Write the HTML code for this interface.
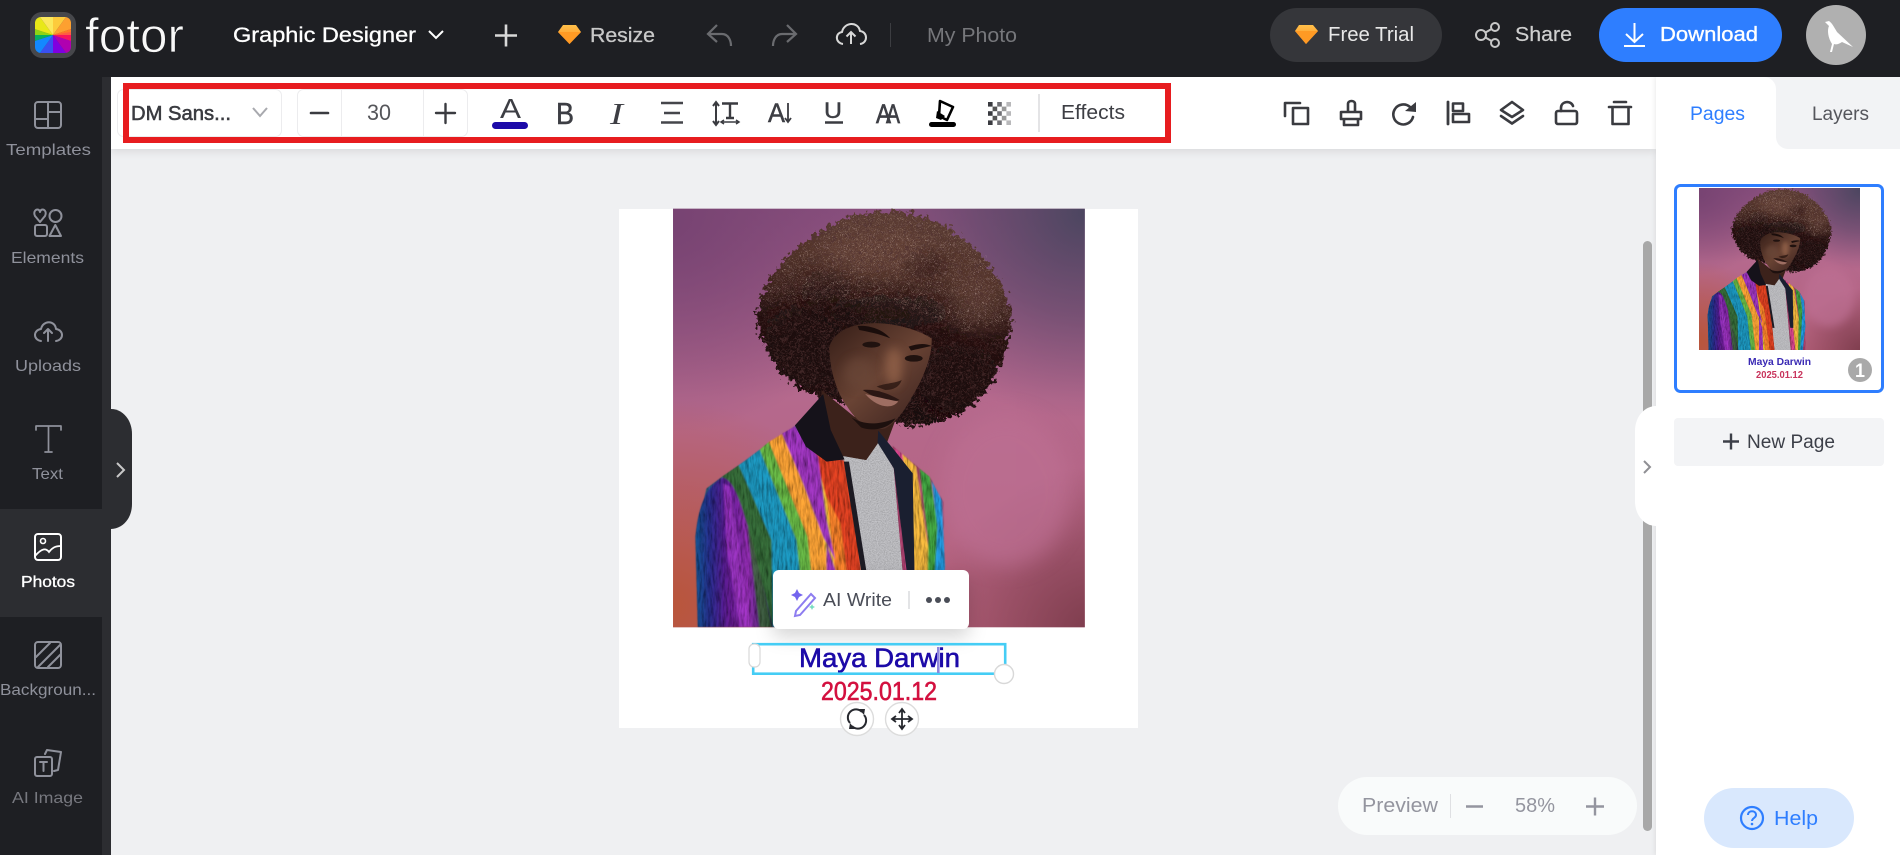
<!DOCTYPE html>
<html lang="en"><head><meta charset="utf-8"><title>Fotor Graphic Designer</title>
<style>
html,body{margin:0;padding:0;width:1900px;height:855px;overflow:hidden;background:#eff0f2}
svg{display:block}
text{font-family:"Liberation Sans",sans-serif;white-space:pre}
.ic{fill:none;stroke:#3a3b40;stroke-width:2.6;stroke-linecap:round;stroke-linejoin:round}
.sb{fill:none;stroke:#8f919b;stroke-width:2;stroke-linecap:round;stroke-linejoin:round}
.lab{fill:#8f919b;font-size:16px}
</style></head><body>
<svg xmlns="http://www.w3.org/2000/svg" width="1900" height="855" viewBox="0 0 1900 855">
<defs>
<linearGradient id="gem" x1="0" y1="0" x2="0" y2="1"><stop offset="0" stop-color="#ffc04a"/><stop offset="1" stop-color="#ff8a1c"/></linearGradient>
<linearGradient id="bg0" x1="0" y1="0" x2="0" y2="1"><stop offset="0" stop-color="#8a507e"/><stop offset=".45" stop-color="#b5698d"/><stop offset="1" stop-color="#b4607a"/></linearGradient>
<radialGradient id="bgTR" gradientUnits="userSpaceOnUse" cx="1350" cy="70" r="620"><stop offset="0" stop-color="#4c4660"/><stop offset=".5" stop-color="#5c4868" stop-opacity=".6"/><stop offset="1" stop-color="#6c4a70" stop-opacity="0"/></radialGradient>
<radialGradient id="bgBR" gradientUnits="userSpaceOnUse" cx="1380" cy="1330" r="500"><stop offset="0" stop-color="#7c3c4c"/><stop offset="1" stop-color="#7c3c4c" stop-opacity="0"/></radialGradient>
<radialGradient id="bgBL" gradientUnits="userSpaceOnUse" cx="140" cy="1250" r="620"><stop offset="0" stop-color="#b9553a"/><stop offset="1" stop-color="#b9553a" stop-opacity="0"/></radialGradient>
<radialGradient id="bgTL" gradientUnits="userSpaceOnUse" cx="140" cy="90" r="640"><stop offset="0" stop-color="#774372"/><stop offset="1" stop-color="#774372" stop-opacity="0"/></radialGradient>
<linearGradient id="hair" gradientUnits="userSpaceOnUse" x1="820" y1="60" x2="740" y2="710"><stop offset="0" stop-color="#5f4036"/><stop offset=".3" stop-color="#4e3027"/><stop offset=".55" stop-color="#261211"/><stop offset="1" stop-color="#180809"/></linearGradient>
<linearGradient id="skin" gradientUnits="userSpaceOnUse" x1="620" y1="420" x2="880" y2="700"><stop offset="0" stop-color="#3a211a"/><stop offset=".5" stop-color="#694334"/><stop offset="1" stop-color="#3e2420"/></linearGradient>
<linearGradient id="sleeve" gradientUnits="userSpaceOnUse" x1="220" y1="0" x2="440" y2="0"><stop offset="0" stop-color="#12508e"/><stop offset=".2" stop-color="#2a2a8a"/><stop offset=".42" stop-color="#5e1a8e"/><stop offset=".68" stop-color="#8f2cae"/><stop offset="1" stop-color="#25204a"/></linearGradient>

<filter id="fz" filterUnits="userSpaceOnUse" x="100" y="0" width="1300" height="1000"><feTurbulence type="fractalNoise" baseFrequency=".07" numOctaves="3" seed="4" result="n"/><feDisplacementMap in="SourceGraphic" in2="n" scale="46" xChannelSelector="R" yChannelSelector="G"/></filter>
<filter id="spk" filterUnits="userSpaceOnUse" x="100" y="0" width="1300" height="1000"><feTurbulence type="fractalNoise" baseFrequency=".22" numOctaves="3" seed="9"/><feColorMatrix values="0 0 0 0 .66  0 0 0 0 .5  0 0 0 0 .43  5 0 0 0 -2.85"/><feComposite in2="SourceAlpha" operator="in"/></filter>
<filter id="spd" filterUnits="userSpaceOnUse" x="100" y="0" width="1300" height="1000"><feTurbulence type="fractalNoise" baseFrequency=".12" numOctaves="3" seed="21"/><feColorMatrix values="0 0 0 0 .08  0 0 0 0 .03  0 0 0 0 .03  5 0 0 0 -2.4"/><feComposite in2="SourceAlpha" operator="in"/></filter>
<filter id="jk" filterUnits="userSpaceOnUse" x="100" y="600" width="1000" height="800"><feGaussianBlur in="SourceGraphic" stdDeviation="2" result="s"/><feTurbulence type="fractalNoise" baseFrequency=".16 .025" numOctaves="3" seed="7"/><feColorMatrix values="1.6 0 0 0 -.1  1.6 0 0 0 -.1  1.6 0 0 0 -.1  0 0 0 0 1" result="g"/><feComposite in="s" in2="g" operator="arithmetic" k1=".9" k2=".22" k3="0" k4="0"/><feComposite in2="s" operator="in"/></filter>
<filter id="tee" filterUnits="userSpaceOnUse" x="500" y="700" width="500" height="700"><feTurbulence type="fractalNoise" baseFrequency=".3" numOctaves="2" seed="2"/><feColorMatrix values=".7 0 0 0 .5  .7 0 0 0 .5  .7 0 0 0 .5  0 0 0 0 1" result="g"/><feComposite in="SourceGraphic" in2="g" operator="arithmetic" k1="1" k2="0" k3="0" k4="0"/><feComposite in2="SourceAlpha" operator="in"/></filter>
<filter id="b12" filterUnits="userSpaceOnUse" x="0" y="0" width="1500" height="1400"><feGaussianBlur stdDeviation="14"/></filter>
<filter id="b30" filterUnits="userSpaceOnUse" x="0" y="0" width="1500" height="1400"><feGaussianBlur stdDeviation="32"/></filter>
<filter id="sh" x="-20%" y="-30%" width="140%" height="180%"><feDropShadow dx="0" dy="8" stdDeviation="9" flood-color="#000" flood-opacity=".16"/></filter>
<filter id="shb" x="-5%" y="-50%" width="110%" height="250%"><feDropShadow dx="0" dy="3" stdDeviation="4" flood-color="#000" flood-opacity=".09"/></filter>
<filter id="shl" x="-20%" y="-5%" width="130%" height="110%"><feDropShadow dx="-1" dy="0" stdDeviation="2" flood-color="#000" flood-opacity=".08"/></filter>
<clipPath id="pc"><rect x="154" y="56" width="1196" height="1256"/></clipPath>
<clipPath id="lc"><rect x="35" y="17" width="36" height="36" rx="6"/></clipPath>
<clipPath id="hc"><path d="M405 345C420 265 480 190 590 118C680 62 800 45 905 90C1015 135 1105 240 1130 350C1145 440 1110 530 1065 600C1020 665 950 695 845 712L700 650L590 622C505 600 450 540 425 475C398 420 392 385 405 345Z"/></clipPath>
<path id="hp" d="M405 345C420 265 480 190 590 118C680 62 800 45 905 90C1015 135 1105 240 1130 350C1145 440 1110 530 1065 600C1020 665 950 695 845 712L700 650L590 622C505 600 450 540 425 475C398 420 392 385 405 345Z"/>

<g id="photo" clip-path="url(#pc)">
 <rect x="154" y="56" width="1196" height="1256" fill="url(#bg0)"/>
 <rect x="154" y="56" width="1196" height="1256" fill="url(#bgTL)"/>
 <rect x="154" y="56" width="1196" height="1256" fill="url(#bgTR)"/>
 <rect x="154" y="56" width="1196" height="1256" fill="url(#bgBL)"/>
 <rect x="154" y="56" width="1196" height="1256" fill="url(#bgBR)"/>
 <ellipse cx="1120" cy="900" rx="190" ry="230" fill="#bd6f93" opacity=".7" filter="url(#b30)"/>
 <!-- hair -->
 <g filter="url(#fz)">
  <use href="#hp" fill="url(#hair)"/>
  <g clip-path="url(#hc)">
   <ellipse cx="540" cy="470" rx="125" ry="125" fill="#1b0b0c" opacity=".85" filter="url(#b30)"/>
   <ellipse cx="985" cy="570" rx="120" ry="105" fill="#1a090d" opacity=".9" filter="url(#b30)"/>
   <ellipse cx="780" cy="365" rx="190" ry="48" fill="#150808" opacity=".7" filter="url(#b30)"/>
   <ellipse cx="600" cy="300" rx="70" ry="60" fill="#1f0f0e" opacity=".55" filter="url(#b30)"/>
   <ellipse cx="880" cy="225" rx="60" ry="40" fill="#24110f" opacity=".5" filter="url(#b12)"/>
   <ellipse cx="740" cy="190" rx="170" ry="60" fill="#7a5547" opacity=".45" filter="url(#b30)"/>
   <ellipse cx="1030" cy="330" rx="70" ry="85" fill="#6c4a3e" opacity=".5" filter="url(#b30)"/>
  </g>
  <use href="#hp" fill="#000" filter="url(#spd)" opacity=".7"/>
  <path d="M410 340C440 250 520 170 640 100C760 50 900 80 1010 150C1090 220 1125 310 1130 400L1000 420L800 340L600 330Z" fill="#000" filter="url(#spk)" opacity=".5"/>
 </g>
 <!-- neck -->
 <path d="M585 600L680 680L800 690L760 800L690 825L640 810L590 740Z" fill="#3c221b"/>
 <!-- right jacket -->
 <g filter="url(#jk)">
  <path d="M790 765L900 860L940 935L945 1312L830 1312Z" fill="#a8406c"/>
  <path d="M800 775L835 805L885 1140L860 1312L845 1312Z" fill="#dc4490"/>
  <path d="M820 790L860 830L905 1140L890 1312L870 1312Z" fill="#f0b53e"/>
  <path d="M870 835L900 860L922 1000L915 1312L890 1312L895 1050Z" fill="#40a040"/>
  <path d="M905 870L935 930L945 1130L925 1312L905 1312L922 1010Z" fill="#2296dc"/>
 </g>
 <!-- tee -->
 <path d="M648 798L715 810L750 758L795 835L835 1312L715 1312L680 1020L650 860Z" fill="#c4c4c8" filter="url(#tee)"/>
 <!-- jacket left -->
 <g filter="url(#jk)">
  <path d="M295 860L510 705L650 810L715 1312L225 1312L218 1040L250 895Z" fill="#2c5a7c"/>
  <path d="M295 860L345 825L445 1050L445 1312L400 1312L378 1040Z" fill="#356a38"/>
  <path d="M345 825L405 778L515 1050L540 1312L445 1312L440 1050Z" fill="#1f94bc"/>
  <path d="M405 778L432 755L545 1040L572 1312L540 1312L512 1050Z" fill="#66b644"/>
  <path d="M432 755L475 728L595 1050L632 1312L572 1312L545 1040Z" fill="#f8a036"/>
  <path d="M535 770L575 795L645 1090L665 1312L632 1312L592 1050Z" fill="#ecc036"/>
  <path d="M565 785L652 812L695 1080L715 1312L665 1312L640 1090Z" fill="#dc4022"/>
  <path d="M600 920L640 1000L680 1312L645 1312L615 1060Z" fill="#f4802c"/>
  <path d="M470 730L508 708L575 800L600 990L625 1110L590 1040L532 880Z" fill="#9c34bc"/>
  <path d="M600 1060L625 1140L630 1312L600 1312Z" fill="#9c34bc"/>
  <path d="M218 1040C225 960 245 890 298 862C330 870 350 930 385 1060L445 1312L225 1312Z" fill="url(#sleeve)"/>
  <path d="M300 880L320 890L350 1100L385 1312L350 1312L310 1080Z" fill="#a438c8" opacity=".7"/>
  <path d="M370 1010L390 1060L440 1312L405 1312Z" fill="#3a6a34" opacity=".8"/>
 </g>
 <!-- collar -->
 <path d="M508 706L590 612L612 720L652 808L600 815L540 770Z" fill="#15121a"/>
 <path d="M650 815L665 815L715 1140L700 1140Z" fill="#1c1a22"/>
 <path d="M750 722L800 785L850 850L855 1140L832 1140L795 835L748 758Z" fill="#1a1f30"/>
 <!-- face -->
 <path d="M608 470C620 430 660 405 720 400C780 395 860 415 905 445C908 490 885 560 848 620C828 660 800 700 770 715C730 725 690 700 660 650C630 610 608 540 608 470Z" fill="url(#skin)" />
 <ellipse cx="795" cy="530" rx="24" ry="58" fill="#8e5f46" opacity=".9" filter="url(#b12)"/>
 <ellipse cx="695" cy="550" rx="46" ry="48" fill="#6a4638" opacity=".7" filter="url(#b12)"/>
 <path d="M690 408C720 405 760 415 785 445C755 432 720 425 695 420Z" fill="#1a0d0b"/>
 <path d="M838 470C860 462 885 458 905 468C885 472 860 478 845 482Z" fill="#1d0f0d"/>
 <ellipse cx="730" cy="464" rx="26" ry="9" fill="#20120f"/>
 <ellipse cx="853" cy="505" rx="26" ry="10" fill="#20120f"/>
 <path d="M745 590C765 580 800 580 818 570C812 590 795 600 770 600Z" fill="#2a1612" opacity=".8"/>
 <path d="M705 600C740 596 780 610 812 630C780 640 740 625 705 600Z" fill="#2b1714"/>
 <path d="M712 612C750 622 785 630 808 634C790 660 745 652 712 612Z" fill="#9e6e62"/>
 <path d="M672 682C700 700 740 710 800 685C780 718 730 725 700 712Z" fill="#1d100e"/>
</g>
</defs>

<!-- canvas bg -->
<rect width="1900" height="855" fill="#eff0f2"/>

<!-- page -->
<rect x="619" y="209" width="519" height="519" fill="#fff"/>
<use href="#photo" transform="translate(620 190) scale(.34435 .33333)"/>

<!-- scrollbar -->
<rect x="1643" y="241" width="9" height="590" rx="4.5" fill="#a8a8a8"/>

<!-- toolbar -->
<rect x="111" y="77" width="1545" height="72" fill="#fff" filter="url(#shb)"/>

<!-- font selector -->
<rect x="117.500" y="89.500" width="164" height="47" rx="6" fill="#fff" stroke="#ececee"/>
<rect x="297.500" y="89.500" width="170" height="47" rx="6" fill="#fff" stroke="#ececee"/>
<path d="M341.500 90V136M423.500 90V136" stroke="#ececee"/>
<text x="131" y="120" font-size="20" fill="#3a3b40" stroke="#3a3b40" stroke-width=".55" textLength="100" lengthAdjust="spacingAndGlyphs">DM Sans...</text>
<path d="M253 108L260 116L267 108" fill="none" stroke="#a8a9ae" stroke-width="2"/>
<path d="M311 113H328" stroke="#3a3b40" stroke-width="2.600" stroke-linecap="round"/>
<text x="367" y="120" font-size="22" fill="#55565a" textLength="24" lengthAdjust="spacingAndGlyphs">30</text>
<path d="M436 113H455M445.500 104V123" stroke="#3a3b40" stroke-width="2.400" stroke-linecap="round"/>

<!-- text tools -->
<text x="500" y="118" font-size="28" fill="#3d3e44" textLength="21" lengthAdjust="spacingAndGlyphs">A</text>
<rect x="492" y="122" width="36" height="7" rx="3.500" fill="#1c0aa8"/>
<text x="556" y="124" font-size="31" fill="#3d3e44" stroke="#3d3e44" stroke-width=".5" textLength="18" lengthAdjust="spacingAndGlyphs">B</text>
<text x="610" y="124" font-size="31" font-style="italic" fill="#3d3e44" textLength="13" lengthAdjust="spacingAndGlyphs" style="font-family:'Liberation Serif',serif">I</text>
<path d="M661 103H683M664 113H680M661 122.500H683" stroke="#45464b" stroke-width="2.600"/>
<path d="M716 103V124M713 106L716 102L719 106M713 121L716 125L719 121" fill="none" stroke="#3a3b40" stroke-width="2"/>
<path d="M722 103.500H738M730 103.500V118M726 118H734" fill="none" stroke="#3a3b40" stroke-width="2.400"/>
<path d="M722 122H738M724 120L721 122L724 124M736 120L739 122L736 124" fill="none" stroke="#3a3b40" stroke-width="1.500"/>
<text x="768" y="122" font-size="27" fill="#3d3e44" stroke="#3d3e44" stroke-width=".5" textLength="17" lengthAdjust="spacingAndGlyphs">A</text>
<path d="M788 103V122M785 118L788 122L791 118" fill="none" stroke="#3a3b40" stroke-width="1.800"/>
<text x="824" y="118" font-size="22" fill="#3d3e44" stroke="#3d3e44" stroke-width=".4" textLength="18" lengthAdjust="spacingAndGlyphs">U</text>
<path d="M825 122.500H843" stroke="#3a3b40" stroke-width="2.600"/>
<text x="876" y="123" font-size="27" fill="#3d3e44" stroke="#3d3e44" stroke-width=".7" textLength="15" lengthAdjust="spacingAndGlyphs">A</text>
<text x="886" y="123" font-size="27" fill="#3d3e44" stroke="#3d3e44" stroke-width=".7" textLength="14" lengthAdjust="spacingAndGlyphs">A</text>
<path d="M940 101L953 107L947 120L939 116Z" fill="#fff" stroke="#000" stroke-width="2.600" stroke-linejoin="round"/>
<path d="M937 111L945 116L941 120L936 118Z" fill="#000"/>
<rect x="929" y="122" width="27" height="5" rx="2.500" fill="#000"/>
<g fill="#3a3b40">
 <rect x="988" y="102" width="4.600" height="4.600"/><rect x="997.200" y="102" width="4.600" height="4.600" fill="#707074"/><rect x="1006.400" y="102" width="4.600" height="4.600" fill="#b8b8ba"/>
 <rect x="992.600" y="106.600" width="4.600" height="4.600" fill="#555"/><rect x="1001.800" y="106.600" width="4.600" height="4.600" fill="#999"/>
 <rect x="988" y="111.200" width="4.600" height="4.600"/><rect x="997.200" y="111.200" width="4.600" height="4.600" fill="#707074"/><rect x="1006.400" y="111.200" width="4.600" height="4.600" fill="#b8b8ba"/>
 <rect x="992.600" y="115.800" width="4.600" height="4.600" fill="#555"/><rect x="1001.800" y="115.800" width="4.600" height="4.600" fill="#999"/>
 <rect x="988" y="120.400" width="4.600" height="4.600"/><rect x="997.200" y="120.400" width="4.600" height="4.600" fill="#707074"/><rect x="1006.400" y="120.400" width="4.600" height="4.600" fill="#b8b8ba"/>
</g>
<rect x="1038" y="94" width="2" height="38" fill="#e4e4e6"/>
<text x="1061" y="119" font-size="20" fill="#3d3e44" textLength="64" lengthAdjust="spacingAndGlyphs">Effects</text>

<!-- red annotation -->
<rect x="126" y="86" width="1042" height="54" fill="none" stroke="#e71c1f" stroke-width="6"/>

<!-- right tool icons -->
<g class="ic">
 <path d="M1285 116V103H1300"/><rect x="1293" y="108" width="15" height="16"/>
 <path d="M1348 112V104C1348 100 1355 100 1355 104V112M1341 112H1361V119H1341ZM1344 119V125H1358V119"/>
 <path d="M1413 117A10 10 0 1 1 1410 107"/>
 <path d="M1448 102V124" stroke-width="2.800"/><rect x="1453" y="103.500" width="10" height="7.500"/><rect x="1453" y="114" width="16" height="8"/>
 <path d="M1512 102L1523 110L1512 117L1501 110ZM1501 116L1512 123.500L1523 116"/>
 <rect x="1556" y="111" width="21" height="13" rx="2"/><path d="M1561 111V108C1561 101 1571 100 1573 106"/>
 <path d="M1609 107H1631M1614 102H1626M1612.500 107V124H1628.500V107"/>
</g>
<path d="M1405 111L1416 112V102Z" fill="#3a3b40"/>

<!-- right panel -->
<rect x="1656" y="77" width="244" height="778" fill="#fff" filter="url(#shl)"/>
<path d="M1776 77H1900V149H1788A12 12 0 0 1 1776 137Z" fill="#f2f3f5"/>
<path d="M1764 77A12 12 0 0 1 1776 89V77Z" fill="#f2f3f5"/>
<text x="1690" y="120" font-size="19" fill="#2e7eff" textLength="55" lengthAdjust="spacingAndGlyphs">Pages</text>
<text x="1812" y="120" font-size="19" fill="#55565c" textLength="57" lengthAdjust="spacingAndGlyphs">Layers</text>

<!-- thumbnail -->
<rect x="1675.500" y="185.500" width="207" height="206" rx="5" fill="#fff" stroke="#2e7eff" stroke-width="3"/>
<use href="#photo" transform="translate(1678.270 180.780) scale(.13462 .12898)"/>
<text x="1748" y="365" font-size="10" font-weight="700" fill="#3a2ab4" textLength="63" lengthAdjust="spacingAndGlyphs">Maya Darwin</text>
<text x="1756" y="378" font-size="10" font-weight="700" fill="#c8345c" textLength="47" lengthAdjust="spacingAndGlyphs">2025.01.12</text>
<circle cx="1860" cy="370" r="12" fill="#a9a9a9"/>
<text x="1855" y="377" font-size="19" font-weight="700" fill="#fff" textLength="10" lengthAdjust="spacingAndGlyphs">1</text>

<!-- new page -->
<rect x="1674" y="418" width="210" height="48" rx="4" fill="#f3f4f6"/>
<path d="M1723 441.500H1739M1731 433.500V449.500" stroke="#3c3f48" stroke-width="2.400"/>
<text x="1747" y="448" font-size="19" fill="#3c3f48" textLength="88" lengthAdjust="spacingAndGlyphs">New Page</text>

<!-- right handle -->
<path d="M1635 431C1635 416 1645 406 1656 406V526C1645 526 1635 516 1635 501Z" fill="#fff"/>
<path d="M1644 461L1650 467L1644 473" fill="none" stroke="#8f8f94" stroke-width="2"/>

<!-- zoom pill -->
<rect x="1338" y="777" width="299" height="58" rx="29" fill="#f9fbfb"/>
<text x="1362" y="812" font-size="20" fill="#94959f" textLength="76" lengthAdjust="spacingAndGlyphs">Preview</text>
<rect x="1450" y="794" width="1" height="24" fill="#dfe0e3"/>
<path d="M1466 806.500H1483" stroke="#94959f" stroke-width="2.400"/>
<text x="1515" y="812" font-size="20" fill="#94959f" textLength="40" lengthAdjust="spacingAndGlyphs">58%</text>
<path d="M1586 806.500H1604M1595 797.500V815.500" stroke="#94959f" stroke-width="2.400"/>

<!-- help -->
<rect x="1704" y="788" width="150" height="60" rx="30" fill="#d9e8fd"/>
<circle cx="1752" cy="818" r="11" fill="none" stroke="#2e7eff" stroke-width="2.200"/>
<path d="M1748 815C1748 810 1756 810 1756 815C1756 818 1752 818 1752 821" fill="none" stroke="#2e7eff" stroke-width="2"/>
<circle cx="1752" cy="824" r="1.300" fill="#2e7eff"/>
<text x="1774" y="825" font-size="20" fill="#2e7eff" textLength="44" lengthAdjust="spacingAndGlyphs">Help</text>

<!-- AI write popup -->
<rect x="773" y="570" width="196" height="59" rx="6" fill="#fff" filter="url(#sh)"/>
<path d="M796 611L811 594L815 598L800 615L795 616Z" fill="none" stroke="#8d7cf0" stroke-width="2"/>
<path d="M797 589L799 593L803 595L799 597L797 601L795 597L791 595L795 593Z" fill="#7465ee"/>
<path d="M812 604L813 606L815 607L813 608L812 610L811 608L809 607L811 606Z" fill="#78dcc0"/>
<text x="823" y="606" font-size="18" fill="#4a4d57" textLength="69" lengthAdjust="spacingAndGlyphs">AI Write</text>
<rect x="908" y="591" width="2" height="18" fill="#e3e4e6"/>
<g fill="#4a4d57"><circle cx="929" cy="600" r="3"/><circle cx="938" cy="600" r="3"/><circle cx="947" cy="600" r="3"/></g>

<!-- text on page -->
<text x="799" y="667" font-size="27" fill="#1c0aa8" stroke="#1c0aa8" stroke-width=".6" textLength="161" lengthAdjust="spacingAndGlyphs">Maya Darwin</text>
<text x="821" y="700" font-size="26" fill="#d3103f" stroke="#d3103f" stroke-width=".6" textLength="116" lengthAdjust="spacingAndGlyphs">2025.01.12</text>

<!-- selection -->
<rect x="753.200" y="644.200" width="252" height="29.500" fill="none" stroke="#45cdf5" stroke-width="2.600"/>
<rect x="937" y="647" width="2.600" height="26" fill="#8f86dc"/>
<rect x="749" y="644" width="11" height="23" rx="5" fill="#fff" stroke="#d8d8d8" stroke-width="1.200"/>
<circle cx="1004" cy="674" r="9.500" fill="#fff" stroke="#d8d8d8" stroke-width="1.400"/>
<circle cx="857" cy="719" r="16.500" fill="#fff" stroke="#dcdcdc" stroke-width="1.400"/>
<circle cx="902" cy="719" r="16.500" fill="#fff" stroke="#dcdcdc" stroke-width="1.400"/>
<path d="M850 723A8 8 0 0 1 862 712M864 715A8 8 0 0 1 852 726" fill="none" stroke="#26282e" stroke-width="2"/>
<path d="M859 709L865 709L864 715ZM855 729L849 729L850 723Z" fill="#26282e"/>
<path d="M893 719H911M902 710V728M899 713L902 709L905 713M899 725L902 729L905 725M896 716L892 719L896 722M908 716L912 719L908 722" fill="none" stroke="#26282e" stroke-width="1.800"/>

<!-- top bar -->
<rect width="1900" height="77" fill="#1e1f23"/>
<rect x="30" y="12" width="46" height="46" rx="12" fill="#46474b"/>
<g clip-path="url(#lc)">
 <path d="M53 35L53 5L70.600 10.700Z" fill="#fdcb3c"/>
 <path d="M53 35L70.600 10.700L81.500 25.700Z" fill="#fda030"/>
 <path d="M53 35L81.500 25.700L81.500 44.300Z" fill="#fe5b45"/>
 <path d="M53 35L81.500 30L81.500 25.700Z" fill="#fe7a28"/>
 <path d="M53 35L81.500 44.300L70.600 59.300Z" fill="#b000b0"/>
 <path d="M53 35L81.500 35L81.500 44.300Z" fill="#f8145e"/>
 <path d="M53 35L70.600 59.300L53 65Z" fill="#8000e0"/>
 <path d="M53 35L53 65L35.400 59.300Z" fill="#3a50f0"/>
 <path d="M53 35L35.400 59.300L24.500 44.300Z" fill="#1388ff"/>
 <path d="M53 35L24.500 44.300L24.500 35Z" fill="#06b060"/>
 <path d="M53 35L24.500 35L24.500 25.700Z" fill="#8ed414"/>
 <path d="M53 35L24.500 25.700L35.400 10.700Z" fill="#e8e818"/>
 <path d="M53 35L35.400 10.700L53 5Z" fill="#fbe85c"/>
</g>
<text x="85" y="52" font-size="48" fill="#f8f8f8" stroke="#1e1f23" stroke-width=".8" textLength="99" lengthAdjust="spacingAndGlyphs">fotor</text>
<text x="233" y="42" font-size="21" fill="#fff" stroke="#fff" stroke-width=".3" textLength="183" lengthAdjust="spacingAndGlyphs">Graphic Designer</text>
<path d="M429 31L436 38L443 31" fill="none" stroke="#fff" stroke-width="2"/>
<path d="M495 35.500H517M506 24.500V46.500" stroke="#d8d8d8" stroke-width="2.600"/>
<path d="M563 25H576L581 32L569.500 44L558 32Z" fill="url(#gem)"/>
<path d="M558 32H581L569.500 44Z" fill="#ff9a24"/>
<text x="590" y="42" font-size="20" fill="#c8c8c8" stroke="#c8c8c8" stroke-width=".3" textLength="65" lengthAdjust="spacingAndGlyphs">Resize</text>
<path d="M717 25L708 34L717 42M708 34H722C728 34 731 40 731 46" fill="none" stroke="#6a6b6f" stroke-width="2.200"/>
<path d="M787 25L796 34L787 42M796 34H782C776 34 773 40 773 46" fill="none" stroke="#6a6b6f" stroke-width="2.200"/>
<path d="M843 44C835 43 835 33 842 32C844 22 858 21 860 31C868 32 868 43 860 44" fill="none" stroke="#d8d8d8" stroke-width="2"/>
<path d="M851 44V32M846.500 36.500L851 32L855.500 36.500" fill="none" stroke="#d8d8d8" stroke-width="2"/>
<rect x="890" y="23" width="1" height="24" fill="#3c3d41"/>
<text x="927" y="42" font-size="20" fill="#76777b" textLength="90" lengthAdjust="spacingAndGlyphs">My Photo</text>
<rect x="1270" y="8" width="172" height="54" rx="27" fill="#35363a"/>
<path d="M1299 25H1313L1318 31L1306 44L1295 31Z" fill="url(#gem)"/>
<path d="M1295 31H1318L1306 44Z" fill="#ff9a24"/>
<text x="1328" y="41" font-size="20" fill="#e8e8e8" textLength="86" lengthAdjust="spacingAndGlyphs">Free Trial</text>
<g fill="none" stroke="#c8c8c8" stroke-width="2"><circle cx="1481" cy="35" r="5"/><circle cx="1495" cy="27" r="4"/><circle cx="1495" cy="43" r="4"/><path d="M1485.500 32.500L1491.500 29M1485.500 37.500L1491.500 41"/></g>
<text x="1515" y="41" font-size="20" fill="#cfcfcf" stroke="#cfcfcf" stroke-width=".2" textLength="57" lengthAdjust="spacingAndGlyphs">Share</text>
<rect x="1599" y="8" width="183" height="54" rx="27" fill="#2e7eff"/>
<path d="M1634.500 23V42M1626 34L1634.500 42L1643 34M1624 46H1645" fill="none" stroke="#fff" stroke-width="2"/>
<text x="1660" y="41" font-size="20" fill="#fff" stroke="#fff" stroke-width=".35" textLength="98" lengthAdjust="spacingAndGlyphs">Download</text>
<circle cx="1836" cy="35" r="30" fill="#b0b0b0"/>
<path d="M1825 22L1829 21C1832 23 1834 27 1837 32L1853 47L1842 42C1839 44 1836 45 1834 44L1832 52L1830 52L1832 44C1828 38 1827 30 1829 26Z" fill="#fff"/>

<!-- sidebar -->
<rect x="0" y="77" width="102" height="778" fill="#1e1f23"/>
<rect x="102" y="77" width="9" height="778" fill="#2c2d31"/>
<rect x="0" y="509" width="102" height="108" fill="#2c2d31"/>
<path d="M111 409C122 409 132 419 132 434V504C132 519 122 529 111 529Z" fill="#2c2d31"/>
<path d="M117 463L124 470L117 477" fill="none" stroke="#c8c8c8" stroke-width="2"/>

<g class="sb">
 <rect x="35" y="102" width="26" height="26" rx="3"/><path d="M48 102V128M35 119H48M48 112H61"/>
 <path d="M40 222L35 216C32 210 39 207 40 212C41 207 48 210 45 216Z"/><circle cx="55.500" cy="216" r="6"/><rect x="35" y="225" width="12" height="11" rx="2"/><path d="M49.500 236H61L55.300 225Z"/>
 <path d="M41 341C33 340 33 330 41 329C43 320 55 320 56 329C64 330 64 340 56 341M48 341V329M44 333L48 329L52 333"/>
 <path d="M36 430V426H61V430M48.500 426V452M45 452H52" stroke-width="1.700"/>
 <rect x="35" y="642" width="26" height="26" rx="3"/><path d="M36 657L50 643M38 667L60 645M48 667L61 654"/>
 <rect x="35" y="757" width="17" height="19" rx="2"/><path d="M45 754L47 750L61 752L58 770L54 771M40 762H47M43.500 762V771"/>
</g>
<rect x="35" y="534" width="26" height="26" rx="3" fill="none" stroke="#fff" stroke-width="2"/>
<circle cx="43" cy="541" r="2.500" fill="none" stroke="#fff" stroke-width="1.600"/>
<path d="M35 556C42 548 46 548 49 552C52 548 55 546 61 546" fill="none" stroke="#fff" stroke-width="1.800"/>

<text class="lab" x="6" y="155" textLength="85" lengthAdjust="spacingAndGlyphs">Templates</text>
<text class="lab" x="11" y="263" textLength="73" lengthAdjust="spacingAndGlyphs">Elements</text>
<text class="lab" x="15" y="371" textLength="66" lengthAdjust="spacingAndGlyphs">Uploads</text>
<text class="lab" x="32" y="479" textLength="31" lengthAdjust="spacingAndGlyphs">Text</text>
<text class="lab" x="21" y="587" textLength="54" lengthAdjust="spacingAndGlyphs" style="fill:#fff" stroke="#fff" stroke-width=".3">Photos</text>
<text class="lab" x="0" y="695" textLength="96" lengthAdjust="spacingAndGlyphs">Backgroun...</text>
<text class="lab" x="12" y="803" textLength="71" lengthAdjust="spacingAndGlyphs" style="fill:#77787f">AI Image</text>
</svg>
</body></html>
